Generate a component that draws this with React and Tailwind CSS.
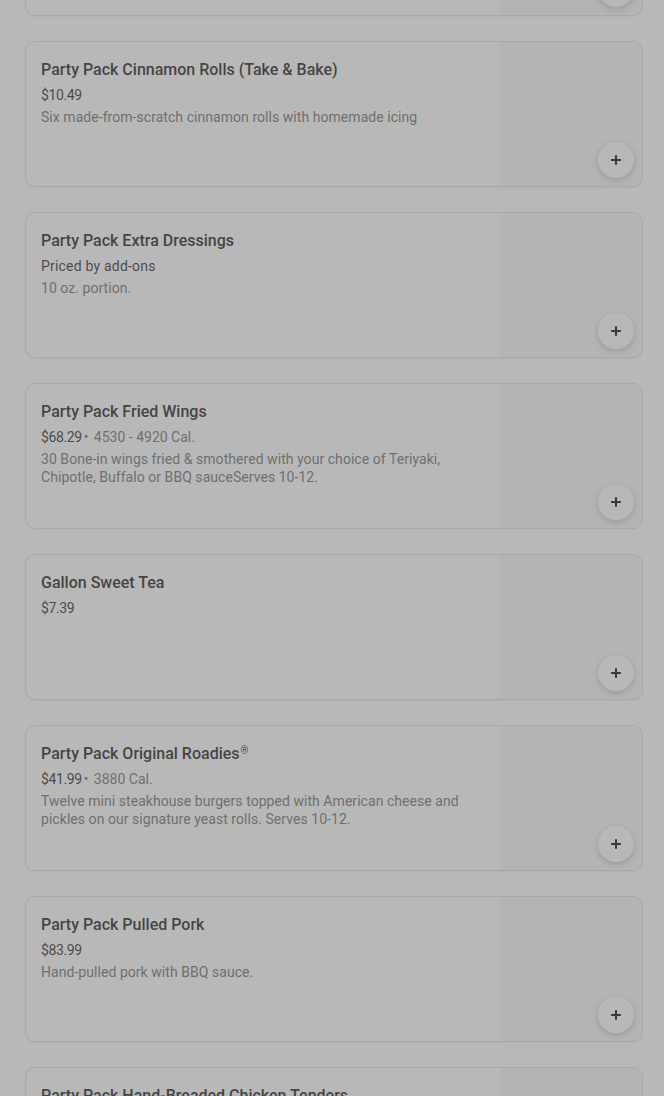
import { Plus } from "lucide-react";

const items = [
  {
    name: "Party Pack Chicken Critters",
    price: "$59.99",
    desc: "Hand-breaded chicken tenders with your choice of two sauces.",
  },
  {
    name: "Party Pack Cinnamon Rolls (Take & Bake)",
    price: "$10.49",
    desc: "Six made-from-scratch cinnamon rolls with homemade icing",
  },
  {
    name: "Party Pack Extra Dressings",
    price: "Priced by add-ons",
    note: true,
    desc: "10 oz. portion.",
  },
  {
    name: "Party Pack Fried Wings",
    price: "$68.29",
    cal: "4530 - 4920 Cal.",
    desc: "30 Bone-in wings fried & smothered with your choice of Teriyaki, Chipotle, Buffalo or BBQ sauceServes 10-12.",
  },
  {
    name: "Gallon Sweet Tea",
    price: "$7.39",
  },
  {
    name: "Party Pack Original Roadies",
    reg: true,
    price: "$41.99",
    cal: "3880 Cal.",
    desc: "Twelve mini steakhouse burgers topped with American cheese and pickles on our signature yeast rolls. Serves 10-12.",
  },
  {
    name: "Party Pack Pulled Pork",
    price: "$83.99",
    desc: "Hand-pulled pork with BBQ sauce.",
  },
  {
    name: "Party Pack Hand-Breaded Chicken Tenders",
    price: "$64.99",
    desc: "Hand-breaded chicken tenders served with your choice of dipping sauces.",
  },
];

function ItemCard({ item }) {
  return (
    <div className="relative flex h-[146px] rounded-[10px] border border-[#dedede] bg-white shadow-[0_1px_2px_rgba(0,0,0,0.06)]">
      <div className="flex-1 min-w-0 pl-[15px] pt-4 pr-4">
        <div className="text-[16px] leading-6 font-medium text-[#141414]">
          {item.name}
          {item.reg && <sup className="text-[10px] ml-[1px]">®</sup>}
        </div>
        <div className="mt-1 text-[14px] leading-[18px] text-[#1f1f1f]">
          <span className={item.note ? "tracking-[0.2px]" : "tracking-[-0.4px]"}>
            {item.price}
          </span>
          {item.cal && (
            <span className="text-[#6b6b6b]">
              <span className="mx-[2px]">•</span>
              {" "}
              {item.cal}
            </span>
          )}
        </div>
        {item.desc && (
          <div className="mt-1 text-[14px] leading-[18px] tracking-[0.05px] text-[#6b6b6b]">
            {item.desc}
          </div>
        )}
      </div>
      <div className="w-[142px] shrink-0 rounded-r-[9px] bg-[#f6f6f6]" />
      <button className="absolute right-[8px] bottom-[8px] flex h-9 w-9 items-center justify-center rounded-full bg-white shadow-[0_2px_6px_rgba(0,0,0,0.22)]">
        <Plus size={14} strokeWidth={3.5} className="text-black" />
      </button>
    </div>
  );
}

export default function App() {
  return (
    <div className="relative min-h-[1096px] overflow-hidden bg-white font-['Roboto',_'Liberation_Sans',_sans-serif]">
      <div className="-mt-[130px] flex flex-col gap-[25px] pl-[25px] pr-[21px] pb-10">
        {items.map((item) => (
          <ItemCard key={item.name} item={item} />
        ))}
      </div>
      <div className="fixed inset-0 bg-[#717171]/50" />
    </div>
  );
}
